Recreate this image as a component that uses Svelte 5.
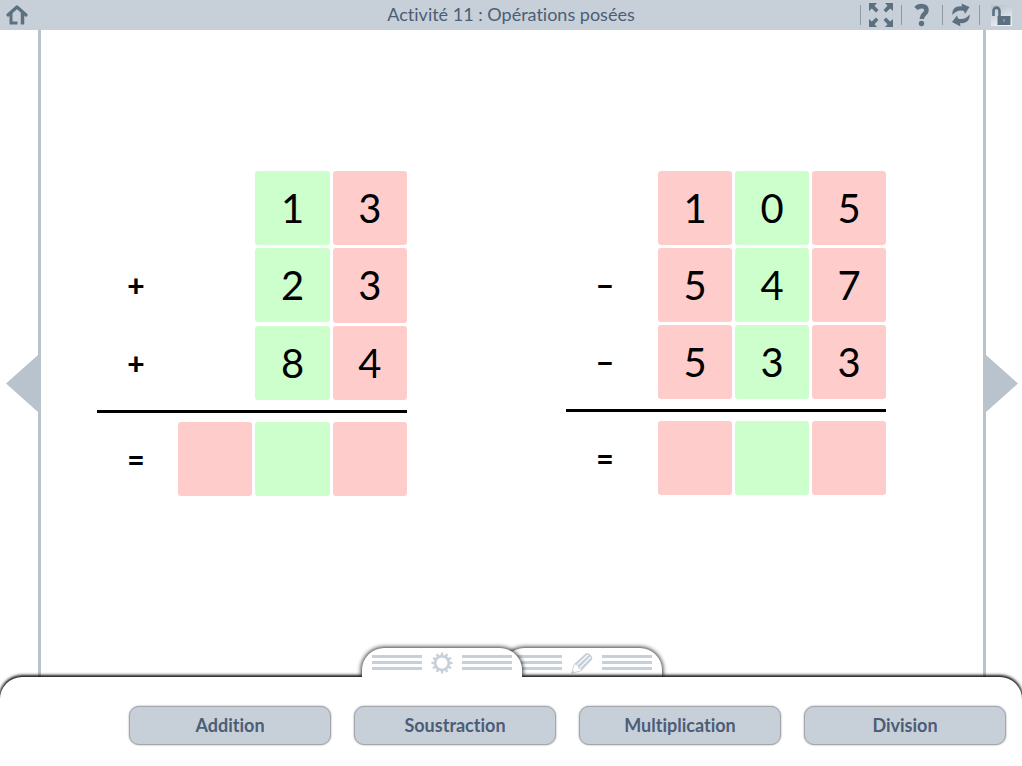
<script lang="ts">
	type Problem = {
		id: string;
		sign: string;
		rows: string[];
		wide?: boolean;
	};

	const problems: Problem[] = [
		{ id: 'addition', sign: '+', rows: [' 13', ' 23', ' 84'] },
		{ id: 'subtraction', sign: '−', rows: ['105', '547', '533'], wide: true }
	];

	const operations = ['Addition', 'Soustraction', 'Multiplication', 'Division'];
	const teeth = Array.from({ length: 12 }, (_, i) => i * 30);

	let activeTab = $state('settings');
	let answers = $state<Record<string, string[]>>({
		addition: ['', '', ''],
		subtraction: ['', '', '']
	});

	function reset() {
		for (const problem of problems) {
			answers[problem.id] = ['', '', ''];
		}
	}

	function toggleFullscreen() {
		if (document.fullscreenElement) document.exitFullscreen();
		else document.documentElement.requestFullscreen();
	}
</script>

<div class="page">
	<header>
		<a class="home" href="#accueil" aria-label="Accueil">
			<svg width="22" height="22" viewBox="0 0 22 22" fill="none" stroke="#5d7080">
				<path d="M2 11 11 3l9 8" stroke-width="3.200" stroke-linejoin="round" stroke-linecap="round" />
				<path d="M5 9v10h6.500" stroke-width="3" />
				<path d="M16.500 9v11.500" stroke-width="3.500" />
			</svg>
		</a>
		<h1>Activité 11 : Opérations posées</h1>
		<div class="tools">
			<button aria-label="Plein écran" onclick={toggleFullscreen}>
				<svg width="24" height="24" viewBox="0 0 24 24" fill="#5d7080">
					{#each [0, 90, 180, 270] as angle}
						<path d="M0 0h8L5.500 2.800 9.500 7 7 9.500 2.800 5.500 0 8z" transform="rotate({angle} 12 12)" />
					{/each}
				</svg>
			</button>
			<button aria-label="Aide">
				<svg width="16" height="24" viewBox="0 0 16 24" fill="none" stroke="#5d7080">
					<path d="M2 5.500C5 2.300 12.500 2 12.500 7.200c0 3.800-4.700 3.800-4.700 8.800" stroke-width="4.600" />
					<circle cx="7.500" cy="20.500" r="2.700" fill="#5d7080" stroke="none" />
				</svg>
			</button>
			<button class="narrow" aria-label="Recommencer" onclick={reset}>
				<svg width="20" height="24" viewBox="0 0 20 24" fill="#5d7080">
					<path d="M1.500 12C.5 6 5.500 2.500 11 3.500L10.500.5 18.500 4l-4.500 7-1-3C9 6.500 4.500 8 1.500 12z" />
					<path d="M18.500 11.500c1 6-4 9.500-9.500 8.500l.5 3.500L1 19l5-6.500 1 3c4 1.500 8.500 0 11.500-4z" />
				</svg>
			</button>
			<button class="last" aria-label="Verrouiller">
				<svg class="lock" width="21" height="21" viewBox="0 0 21 21" fill="none" stroke="#5d7080">
					<path d="M2.500 11V6c0-4.500 6-4.500 6 0v6" stroke-width="2.600" />
					<path d="M6.500 11h13v9h-13z" fill="#5d7080" stroke="none" />
					<path d="M13 14v3" stroke="#8fa0ac" stroke-width="1.500" />
				</svg>
			</button>
		</div>
	</header>

	<main>
		<button class="rail prev" aria-label="Page précédente">
			<svg width="32" height="57" viewBox="0 0 32 57"><path d="M32 0v57L0 28.500z" fill="#b8c3cd" /></svg>
		</button>

		<div class="stage">
			{#each problems as problem (problem.id)}
				<section class="slot">
					<div class="problem" class:wide={problem.wide}>
						{#each problem.rows as row, r}
							<span class="sign">{r > 0 ? problem.sign : ''}</span>
							{#each row.split('') as digit, c}
								{#if digit === ' '}
									<span></span>
								{:else}
									<span class="cell" class:green={c === 1}>{digit}</span>
								{/if}
							{/each}
						{/each}
						<hr />
						<span class="sign">=</span>
						{#each answers[problem.id] as _, c}
							<input
								class="cell"
								class:green={c === 1}
								maxlength="1"
								inputmode="numeric"
								aria-label="Résultat, chiffre {c + 1}"
								bind:value={answers[problem.id][c]}
							/>
						{/each}
					</div>
				</section>
			{/each}
		</div>

		<button class="rail next" aria-label="Page suivante">
			<svg width="32" height="57" viewBox="0 0 32 57"><path d="M0 0v57l32-28.500z" fill="#b8c3cd" /></svg>
		</button>
	</main>

	<footer>
		<div class="tabs">
			<button class="tab" class:active={activeTab === 'settings'} aria-label="Réglages" onclick={() => (activeTab = 'settings')}>
				<span class="stripes"></span>
				<svg width="22" height="22" viewBox="-11 -11 22 22">
					{#each teeth as angle}
						<path d="M-1.500-7h3l-.5-3.500h-2z" fill="#c7d0d8" transform="rotate({angle})" />
					{/each}
					<circle r="6.800" fill="none" stroke="#c7d0d8" stroke-width="2.600" />
				</svg>
				<span class="stripes"></span>
			</button>
			<button class="tab" class:active={activeTab === 'draw'} aria-label="Dessin" onclick={() => (activeTab = 'draw')}>
				<span class="stripes"></span>
				<svg width="22" height="22" viewBox="0 0 20 20">
					<path d="M3 11 13 1.500c2-2 8 2.500 6 5.500l-9.500 10z" fill="#c7d0d8" />
					<path d="M5.500 12 15.500 2.500M8 14.500l10-10" stroke="#fff" stroke-width="1" />
					<path d="M3 11 .5 19.500l9-2.500c0-2-1-2.500-2.500-2.500 0-2-1.500-3.500-4-3.500z" fill="#fff" stroke="#c7d0d8" stroke-width=".8" />
					<path d="m.5 19.500 1-3 2 2z" fill="#c7d0d8" />
				</svg>
				<span class="stripes"></span>
			</button>
		</div>
		<div class="panel">
			{#each operations as operation}
				<button class="operation">{operation}</button>
			{/each}
		</div>
	</footer>
</div>

<style>
	:global(body) {
		background: #fff;
	}

	.page {
		min-height: 100vh;
		display: flex;
		flex-direction: column;
		overflow: hidden;
		font-family: Lato, 'Open Sans', sans-serif;
		font-variant-ligatures: none;
	}

	button {
		font: inherit;
		font-variant-ligatures: none;
		padding: 0;
		border: 0;
		background: none;
		cursor: pointer;
	}

	svg {
		display: block;
		flex-shrink: 0;
	}

	header {
		height: 30px;
		display: grid;
		grid-template-columns: 1fr auto 1fr;
		align-items: center;
		background: #c7d0d8;
	}

	.home {
		justify-self: start;
		margin-left: 6px;
	}

	h1 {
		margin: 0;
		font-size: 18px;
		line-height: 28px;
		font-weight: 400;
		align-self: start;
		color: #4c5d77;
	}

	.tools {
		display: flex;
		justify-content: flex-end;
	}

	.tools button {
		width: 41px;
		height: 20px;
		display: flex;
		align-items: center;
		justify-content: center;
		border-left: 1px solid #8b9aa6;
	}

	.tools .narrow {
		width: 37px;
	}

	.tools .last {
		width: 43px;
	}

	.lock {
		background: linear-gradient(160deg, #b4c1cc, #f4f6f8);
	}

	main {
		flex: 1;
		display: flex;
	}

	.rail {
		width: 41px;
		box-sizing: border-box;
		display: flex;
		align-items: center;
		padding-top: 60px;
	}

	.prev {
		justify-content: flex-end;
		border-right: 3px solid #b8c3cb;
	}

	.next {
		width: 39px;
		border-left: 3px solid #b8c3cb;
	}

	.stage {
		flex: 1;
		display: grid;
		grid-template-columns: 1fr 1fr;
		column-gap: 6px;
		align-content: center;
		align-items: start;
		padding-bottom: 40px;
	}

	.slot {
		display: flex;
		justify-content: center;
		padding-right: 46px;
	}

	.problem {
		display: grid;
		grid-template-columns: 78px repeat(3, 1fr);
		gap: 3px;
		width: 310px;
	}

	.problem.wide {
		grid-template-columns: 89px repeat(3, 1fr);
		width: 320px;
	}

	.sign {
		width: 78px;
		display: flex;
		align-items: center;
		justify-content: center;
		font-size: 30px;
		font-weight: 900;
	}

	.cell {
		aspect-ratio: 1;
		width: 100%;
		min-width: 0;
		box-sizing: border-box;
		display: flex;
		align-items: center;
		justify-content: center;
		padding: 0;
		border: 0;
		border-radius: 3px;
		background: #fcc;
		color: #000;
		font-family: inherit;
		font-size: 40px;
		text-align: center;
	}

	.cell.green {
		background: #cfc;
	}

	hr {
		grid-column: 1 / -1;
		width: 100%;
		height: 3px;
		margin: 7px 0 6px;
		border: 0;
		background: #000;
	}

	footer {
		margin-top: -29px;
		position: relative;
	}

	.tabs {
		display: flex;
		justify-content: center;
		padding-left: 2px;
	}

	.tab {
		width: 160px;
		height: 29px;
		display: flex;
		align-items: center;
		justify-content: center;
		gap: 9px;
		position: relative;
		background: #fff;
		border-radius: 22px 22px 0 0;
		box-shadow: 0 0 4px 1px #333;
		clip-path: inset(-8px -8px 0 -8px);
	}

	.tab.active {
		z-index: 2;
	}

	.tab + .tab {
		margin-left: -20px;
	}

	.stripes {
		width: 50px;
		height: 15px;
		background: repeating-linear-gradient(#c7d0d8 0 3px, #fff 3px 6px);
	}

	.panel {
		position: relative;
		z-index: 1;
		display: grid;
		grid-template-columns: repeat(4, 1fr);
		gap: 23px;
		padding: 29px 16px 21px 129px;
		background: #fff;
		border-radius: 22px 22px 0 0;
		box-shadow: 0 -1px 3px 1px #111;
	}

	.operation {
		height: 39px;
		padding-bottom: 2px;
		border: 1px solid #a3a6aa;
		border-radius: 10px;
		background: #c7d0d8;
		box-shadow: 0 0 2px #999;
		color: #4c5d77;
		font-size: 18px;
		font-weight: 700;
	}
</style>
